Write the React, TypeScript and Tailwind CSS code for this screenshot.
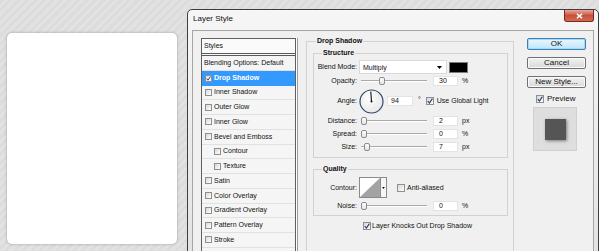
import React from "react";

const styles = [
	{ label: "Drop Shadow", checked: true, active: true },
	{ label: "Inner Shadow" },
	{ label: "Outer Glow" },
	{ label: "Inner Glow" },
	{ label: "Bevel and Emboss" },
	{ label: "Contour", sub: true },
	{ label: "Texture", sub: true },
	{ label: "Satin" },
	{ label: "Color Overlay" },
	{ label: "Gradient Overlay" },
	{ label: "Pattern Overlay" },
	{ label: "Stroke" },
];

const Check = ({ checked = false, small = false }: { checked?: boolean; small?: boolean }) => (
	<span
		className={
			small
				? "flex h-[7px] w-[7px] shrink-0 items-center justify-center border border-[#8f8f8f] bg-gradient-to-br from-[#d8d8d8] to-white"
				: "flex h-[8px] w-[8px] shrink-0 items-center justify-center border border-[#8f8f8f] bg-gradient-to-br from-[#d8d8d8] to-white"
		}
	>
		{checked && (
			<svg viewBox="0 0 6 6" className="h-full w-full">
				<path d="M0.8 3.2 L2.4 5 L5.4 0.6" stroke="#243b6e" strokeWidth="1.1" fill="none" />
			</svg>
		)}
	</span>
);

const Slider = ({ pos }: { pos: number }) => (
	<div className="relative ml-[4px] h-[10px] w-[66px]">
		<div className="absolute left-0 right-0 top-[4px] h-[2px] border-t border-b border-t-[#a9a9a9] border-b-white" />
		<div
			className="absolute top-[1px] h-[8px] w-[6px] rounded-[2px] border border-[#8c8c8c] bg-gradient-to-b from-white to-[#e4e4e4]"
			style={{ left: pos }}
		/>
	</div>
);

const Field = ({ value, className }: { value: string; className: string }) => (
	<div className={`h-[10px] border border-[#e3e3e3] bg-white leading-[8px] ${className}`}>{value}</div>
);

const SliderRow = ({ label, pos, value, unit }: { label: string; pos: number; value: string; unit: string }) => (
	<div className="flex h-[10px] items-center">
		<span className="w-[43px] text-right">{label}</span>
		<Slider pos={pos} />
		<Field value={value} className="ml-[6px] w-[25px] pl-[5px]" />
		<span className="ml-[4px]">{unit}</span>
	</div>
);

const Arrow = () => (
	<svg viewBox="0 0 5 3" className="h-[3px] w-[5px]">
		<path d="M0 0 H5 L2.5 3 Z" fill="#000" />
	</svg>
);

const Button = ({ label, primary = false }: { label: string; primary?: boolean }) => (
	<div
		className={
			primary
				? "flex h-[12px] w-[59px] items-center justify-center rounded-[2px] border border-[#3c7fb1] bg-gradient-to-b from-[#eaf6fd] to-[#bee6fd] text-[8px] shadow-[inset_0_0_0_1px_#a7d9f5]"
				: "flex h-[12px] w-[59px] items-center justify-center rounded-[2px] border border-[#707070] bg-gradient-to-b from-[#f2f2f2] to-[#d9d9d9] text-[8px] shadow-[inset_0_0_0_1px_#fbfbfb]"
		}
	>
		{label}
	</div>
);

export default function App() {
	return (
		<div className="flex h-[251px] w-[599px] items-start overflow-hidden bg-[repeating-linear-gradient(135deg,#dcdcdc_0px,#dcdcdc_3px,#e2e2e2_3px,#e2e2e2_6px)] font-['Liberation_Sans',Arial,sans-serif] text-[7px] leading-[8px] text-[#111]">
			<div className="ml-[7px] mt-[33px] h-[211px] w-[170px] shrink-0 rounded-[5px] bg-white shadow-[0_0_3px_rgba(0,0,0,0.3)]" />

			<div className="ml-[10px] mt-[9px] flex h-[260px] w-[412px] shrink-0 flex-col rounded-t-[5px] border border-[#3e3e3e] bg-gradient-to-b from-[#f6f6f6] to-[#e2e2e2] px-[4px]">
				<div className="flex h-[20px] shrink-0 items-start justify-between">
					<span className="pl-[1px] pt-[4px] text-[8px] leading-[10px]">Layer Style</span>
					<div className="flex h-[12px] w-[30px] items-center justify-center rounded-b-[3px] border border-t-0 border-[#7a2a20] bg-gradient-to-b from-[#e9a99b] via-[#c9503b] to-[#d46a52]">
						<svg viewBox="0 0 8 7" className="h-[6px] w-[7px]">
							<path d="M1 1 L7 6 M7 1 L1 6" stroke="#fff" strokeWidth="1.6" />
						</svg>
					</div>
				</div>

				<div className="flex flex-1 items-start border border-[#a5a5a5] bg-[#f0f0f0]">
					<div className="ml-[8px] mt-[7px] flex h-[230px] w-[95px] shrink-0 flex-col border border-[#5f5f5f] bg-[#f5f5f5] shadow-[1px_0_0_#fff,2px_0_0_#9a9a9a]">
						<div className="flex h-[17px] shrink-0 items-center border-b-[3px] border-double border-[#5a5a5a] bg-[#fafafa] pl-[2px]">
							Styles
						</div>
						<div className="flex h-[14.75px] shrink-0 items-center border-b border-[#e1e1e1] pl-[2px]">
							Blending Options: Default
						</div>
						{styles.map(s => (
							<div
								key={s.label}
								className={
									s.active
										? "flex h-[14.75px] shrink-0 items-center gap-[2px] bg-[#3399ff] pl-[3px] font-bold text-white"
										: s.sub
											? "flex h-[14.75px] shrink-0 items-center gap-[2px] border-b border-[#e1e1e1] pl-[12px]"
											: "flex h-[14.75px] shrink-0 items-center gap-[2px] border-b border-[#e1e1e1] pl-[3px]"
								}
							>
								<Check checked={s.checked} small />
								<span>{s.label}</span>
							</div>
						))}
					</div>

					<fieldset className="ml-[10px] mt-[6px] h-[230px] w-[208px] shrink-0 border border-[#d2d2d2]">
						<legend className="ml-[9px] px-[1px] font-bold leading-[8px]">Drop Shadow</legend>

						<fieldset className="ml-[6px] mt-[4px] w-[195px] border border-[#d2d2d2] pb-[5px]">
							<legend className="ml-[8px] px-[1px] font-bold leading-[8px]">Structure</legend>
							<div className="mt-[3px] flex h-[14px] items-center">
								<span className="w-[43px] text-right">Blend Mode:</span>
								<div className="ml-[2px] flex h-[14px] w-[88px] items-center justify-between border border-[#dadada] bg-white pl-[3px] pr-[4px]">
									<span className="pt-[1px]">Multiply</span>
									<Arrow />
								</div>
								<div className="ml-[2px] h-[11px] w-[19px] border border-[#7d7d7d] bg-black" />
							</div>
							<div className="mt-[2px]">
								<SliderRow label="Opacity:" pos={18} value="30" unit="%" />
							</div>
							<div className="mt-[3px] flex h-[24px] items-center">
								<span className="w-[43px] text-right">Angle:</span>
								<svg viewBox="0 0 25 25" className="ml-[2px] h-[25px] w-[25px]">
									<defs>
										<radialGradient id="dial" cx="40%" cy="35%" r="70%">
											<stop offset="0" stopColor="#ffffff" />
											<stop offset="1" stopColor="#e6e6e6" />
										</radialGradient>
									</defs>
									<circle cx="12.5" cy="12.5" r="11.5" fill="url(#dial)" stroke="#324a66" strokeWidth="1.2" />
									<path d="M12.5 12.5 L11.8 2.6" stroke="#111" strokeWidth="1.1" />
									<circle cx="12.5" cy="12.5" r="1" fill="#111" />
								</svg>
								<Field value="94" className="ml-[3px] w-[26px] pl-[3px]" />
								<span className="ml-[5px] self-start pt-[7px]">°</span>
								<span className="ml-[5px]">
									<Check checked />
								</span>
								<span className="ml-[3px]">Use Global Light</span>
							</div>
							<div className="mt-[3px]">
								<SliderRow label="Distance:" pos={0} value="2" unit="px" />
							</div>
							<div className="mt-[3px]">
								<SliderRow label="Spread:" pos={0} value="0" unit="%" />
							</div>
							<div className="mt-[3px]">
								<SliderRow label="Size:" pos={3} value="7" unit="px" />
							</div>
						</fieldset>

						<fieldset className="ml-[6px] mt-[7px] w-[195px] border border-[#d2d2d2] pb-[4px]">
							<legend className="ml-[8px] px-[1px] font-bold leading-[8px]">Quality</legend>
							<div className="mt-[4px] flex h-[21px] items-center">
								<span className="w-[43px] text-right">Contour:</span>
								<div className="ml-[2px] flex h-[21px]">
									<svg viewBox="0 0 22 21" className="h-[21px] w-[22px] border border-[#8a8a8a] bg-white">
										<path d="M0 21 L22 0 L22 21 Z" fill="#a3a3a3" />
									</svg>
									<div className="flex w-[6px] items-center justify-center border border-l-0 border-[#8a8a8a] bg-[#f7f7f7]">
										<svg viewBox="0 0 4 3" className="h-[2px] w-[3px]">
											<path d="M0 0 H4 L2 3 Z" fill="#000" />
										</svg>
									</div>
								</div>
								<span className="ml-[10px]">
									<Check />
								</span>
								<span className="ml-[2px]">Anti-aliased</span>
							</div>
							<div className="mt-[3px]">
								<SliderRow label="Noise:" pos={0} value="0" unit="%" />
							</div>
						</fieldset>

						<div className="ml-[56px] mt-[5px] flex h-[10px] items-center gap-[1px]">
							<Check checked />
							<span>Layer Knocks Out Drop Shadow</span>
						</div>
					</fieldset>

					<div className="ml-[13px] mt-[7px] flex w-[59px] shrink-0 flex-col">
						<Button label="OK" primary />
						<div className="mt-[7px]">
							<Button label="Cancel" />
						</div>
						<div className="mt-[7px]">
							<Button label="New Style..." />
						</div>
						<div className="mt-[6px] flex h-[9px] items-center gap-[3px] pl-[9px] text-[8px]">
							<Check checked />
							<span>Preview</span>
						</div>
						<div className="ml-[6px] mt-[4px] flex h-[44px] w-[44px] items-center justify-center border border-[#d0d0d0] bg-[#dedede]">
							<div className="h-[21px] w-[21px] bg-[#555] shadow-[1px_1px_3px_rgba(0,0,0,0.45)]" />
						</div>
					</div>
				</div>
			</div>
		</div>
	);
}
